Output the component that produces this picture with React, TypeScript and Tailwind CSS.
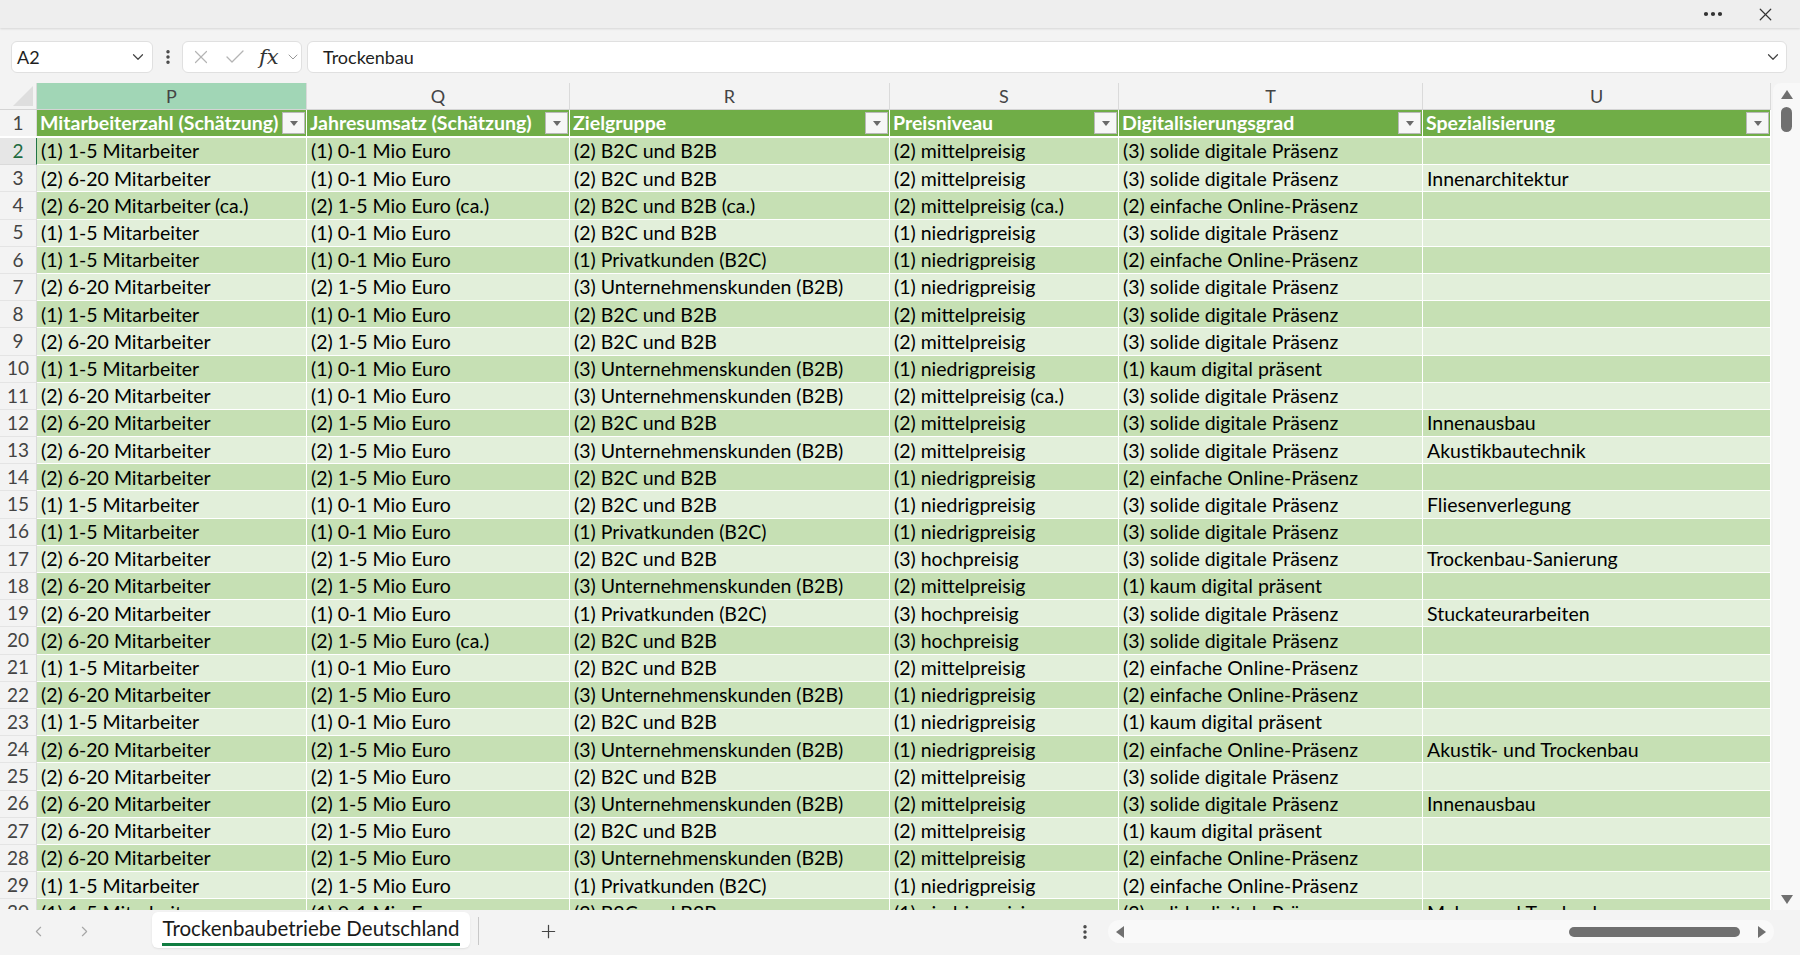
import React from 'react';
import { X, Check, ChevronDown, ChevronLeft, ChevronRight, Plus, Ellipsis, EllipsisVertical } from 'lucide-react';

const columns = [
  { letter: 'P', title: 'Mitarbeiterzahl (Schätzung)', width: 'w-[270px]' },
  { letter: 'Q', title: 'Jahresumsatz (Schätzung)', width: 'w-[263px]' },
  { letter: 'R', title: 'Zielgruppe', width: 'w-[320px]' },
  { letter: 'S', title: 'Preisniveau', width: 'w-[229px]' },
  { letter: 'T', title: 'Digitalisierungsgrad', width: 'w-[304px]' },
  { letter: 'U', title: 'Spezialisierung', width: 'w-[348px]' },
];

const M1 = '(1) 1-5 Mitarbeiter';
const M2 = '(2) 6-20 Mitarbeiter';
const U1 = '(1) 0-1 Mio Euro';
const U2 = '(2) 1-5 Mio Euro';
const ZB = '(2) B2C und B2B';
const ZP = '(1) Privatkunden (B2C)';
const ZU = '(3) Unternehmenskunden (B2B)';
const PN = '(1) niedrigpreisig';
const PM = '(2) mittelpreisig';
const PH = '(3) hochpreisig';
const DS = '(3) solide digitale Präsenz';
const DE = '(2) einfache Online-Präsenz';
const DK = '(1) kaum digital präsent';

const rows: string[][] = [
  [M1, U1, ZB, PM, DS, ''],
  [M2, U1, ZB, PM, DS, 'Innenarchitektur'],
  ['(2) 6-20 Mitarbeiter (ca.)', '(2) 1-5 Mio Euro (ca.)', '(2) B2C und B2B (ca.)', '(2) mittelpreisig (ca.)', DE, ''],
  [M1, U1, ZB, PN, DS, ''],
  [M1, U1, ZP, PN, DE, ''],
  [M2, U2, ZU, PN, DS, ''],
  [M1, U1, ZB, PM, DS, ''],
  [M2, U2, ZB, PM, DS, ''],
  [M1, U1, ZU, PN, DK, ''],
  [M2, U1, ZU, '(2) mittelpreisig (ca.)', DS, ''],
  [M2, U2, ZB, PM, DS, 'Innenausbau'],
  [M2, U2, ZU, PM, DS, 'Akustikbautechnik'],
  [M2, U2, ZB, PN, DE, ''],
  [M1, U1, ZB, PN, DS, 'Fliesenverlegung'],
  [M1, U1, ZP, PN, DS, ''],
  [M2, U2, ZB, PH, DS, 'Trockenbau-Sanierung'],
  [M2, U2, ZU, PM, DK, ''],
  [M2, U1, ZP, PH, DS, 'Stuckateurarbeiten'],
  [M2, '(2) 1-5 Mio Euro (ca.)', ZB, PH, DS, ''],
  [M1, U1, ZB, PM, DE, ''],
  [M2, U2, ZU, PN, DE, ''],
  [M1, U1, ZB, PN, DK, ''],
  [M2, U2, ZU, PN, DE, 'Akustik- und Trockenbau'],
  [M2, U2, ZB, PM, DS, ''],
  [M2, U2, ZU, PM, DS, 'Innenausbau'],
  [M2, U2, ZB, PM, DK, ''],
  [M2, U2, ZU, PM, DE, ''],
  [M1, U2, ZP, PN, DE, ''],
  [M1, U1, ZB, PN, DS, 'Maler- und Trockenbau'],
];

function FilterButton() {
  return (
    <div className="mr-px flex h-[22px] w-[23px] shrink-0 items-center justify-center border border-[#b9b9b9] bg-[#f6f6f6]">
      <div className="h-0 w-0 border-x-[4px] border-t-[5px] border-x-transparent border-t-[#6a6a6a]" />
    </div>
  );
}

export default function App() {
  return (
    <div
      className="flex h-[955px] w-[1800px] flex-col overflow-hidden bg-[#f3f3f3] text-[#1f1f1f]"
      style={{ fontFamily: "Lato, 'Liberation Sans', sans-serif" }}
    >
      {/* window strip */}
      <div className="relative z-10 flex h-[28px] shrink-0 items-center justify-end bg-[#eeeeee] pr-[24px] shadow-[0_1px_2px_rgba(0,0,0,0.12)]">
        <Ellipsis className="mr-[30px] h-[24px] w-[24px] text-[#333]" strokeWidth={2.2} />
        <X className="h-[21px] w-[21px] text-[#333]" strokeWidth={1.4} />
      </div>

      {/* formula bar */}
      <div className="flex h-[55px] shrink-0 items-start pl-[11px] pt-[13px]">
        <div className="flex h-[32px] w-[142px] items-center justify-between rounded-md border border-[#e0e0e0] bg-white pl-[5px] pr-[5px] text-[18px]">
          <span>A2</span>
          <ChevronDown className="h-[18px] w-[18px] text-[#444]" strokeWidth={1.6} />
        </div>
        <div className="flex h-[32px] w-[29px] items-center justify-center">
          <EllipsisVertical className="h-[18px] w-[18px] text-[#444]" strokeWidth={2.6} />
        </div>
        <div className="flex h-[32px] w-[120px] items-center rounded-md border border-[#e0e0e0] bg-white pl-[7px]">
          <X className="h-[22px] w-[22px] text-[#b4b4b4]" strokeWidth={1.3} />
          <Check className="ml-[11px] h-[24px] w-[24px] text-[#b4b4b4]" strokeWidth={1.3} />
          <span
            className="ml-[12px] text-[21px] italic leading-none text-[#333]"
            style={{ fontFamily: "'DejaVu Serif', 'Liberation Serif', serif" }}
          >
            fx
          </span>
          <ChevronDown className="ml-[6px] h-[16px] w-[16px] text-[#999]" strokeWidth={1.5} />
        </div>
        <div className="ml-[5px] flex h-[32px] w-[1480px] items-center justify-between rounded-md border border-[#e0e0e0] bg-white pl-[15px] pr-[4px] text-[18px]">
          <span>Trockenbau</span>
          <ChevronDown className="h-[18px] w-[18px] text-[#444]" strokeWidth={1.6} />
        </div>
      </div>

      {/* sheet + vertical scrollbar */}
      <div className="flex h-[827px] shrink-0">
        <div className="flex w-[1771px] flex-col overflow-hidden bg-white">
          {/* column letters */}
          <div className="flex h-[27px] shrink-0 border-b border-[#d4d4d4] bg-[#f3f3f3] text-[18px] text-[#444]">
            <div className="relative w-[37px] shrink-0 border-r border-[#dadada]">
              <div className="absolute bottom-[3px] right-[3px] h-0 w-0 border-b-[20px] border-l-[20px] border-l-transparent border-b-[#dedede]" />
            </div>
            {columns.map((c, i) => (
              <div
                key={c.letter}
                className={`${c.width} flex shrink-0 items-center justify-center border-r border-[#dadada] ${i === 0 ? 'bg-[#a1d6b6]' : ''}`}
              >
                {c.letter}
              </div>
            ))}
          </div>

          {/* table header row */}
          <div className="flex h-[28px] shrink-0 border-b-2 border-white">
            <div className="flex w-[37px] shrink-0 items-center justify-center border-r border-[#dadada] bg-[#f3f3f3] text-[19px] text-[#444]">
              1
            </div>
            {columns.map((c) => (
              <div
                key={c.letter}
                className={`${c.width} flex shrink-0 items-center justify-between border-r border-white bg-[#70ad47] pl-[3px] text-[19.5px] font-bold text-white`}
              >
                <span className="whitespace-nowrap">{c.title}</span>
                <FilterButton />
              </div>
            ))}
          </div>

          {/* data rows */}
          {rows.map((r, idx) => {
            const n = idx + 2;
            const dark = n % 2 === 0;
            const active = n === 2;
            return (
              <div key={n} className="flex h-[27.2px] shrink-0">
                <div
                  className={`flex w-[37px] shrink-0 items-center justify-center border-b border-r text-[19px] ${
                    active
                      ? 'border-b-[#dadada] border-r-[#217346] bg-[#e6e6e6] text-[#1e6b41]'
                      : 'border-b-[#e4e4e4] border-r-[#dadada] bg-[#f3f3f3] text-[#444]'
                  }`}
                >
                  {n}
                </div>
                {columns.map((c, ci) => (
                  <div
                    key={c.letter}
                    className={`${c.width} flex shrink-0 items-center overflow-hidden whitespace-nowrap border-b border-r border-white pl-[4px] text-[19.5px] text-black ${
                      dark ? 'bg-[#c6e0b4]' : 'bg-[#e2efda]'
                    }`}
                  >
                    {r[ci]}
                  </div>
                ))}
              </div>
            );
          })}
        </div>

        {/* vertical scrollbar */}
        <div className="flex w-[29px] shrink-0 pl-[2px]">
          <div className="flex w-full flex-col items-center rounded-tl-lg bg-[#f8f8f8] pt-[7px] pb-[6px]">
            <div className="h-0 w-0 border-x-[6px] border-b-[9px] border-x-transparent border-b-[#707070]" />
            <div className="mt-[8px] h-[25px] w-[11px] rounded-full bg-[#707070]" />
            <div className="flex-1" />
            <div className="h-0 w-0 border-x-[6px] border-t-[9px] border-x-transparent border-t-[#707070]" />
          </div>
        </div>
      </div>

      {/* sheet tabs + horizontal scrollbar */}
      <div className="flex h-[45px] shrink-0 items-start">
        <div className="flex h-[43px] items-center pl-[30px]">
          <ChevronLeft className="h-[17px] w-[17px] text-[#a6a6a6]" strokeWidth={1.6} />
          <ChevronRight className="ml-[29px] h-[17px] w-[17px] text-[#a6a6a6]" strokeWidth={1.6} />
        </div>
        <div className="ml-[59px] mt-[2px] flex h-[36px] w-[318px] flex-col items-center justify-center rounded-md bg-white shadow-[0_1px_2px_rgba(0,0,0,0.08)]">
          <span className="mt-[2px] whitespace-nowrap text-[20.5px] leading-[24px] text-[#1a1a1a]">Trockenbaubetriebe Deutschland</span>
          <div className="mt-[3px] h-[3px] w-[298px] bg-[#107c41]" />
        </div>
        <div className="ml-[8px] mt-[7px] h-[28px] w-px bg-[#c8c8c8]" />
        <div className="ml-[59px] flex h-[43px] items-center">
          <Plus className="h-[21px] w-[21px] text-[#444]" strokeWidth={1.4} />
        </div>
        <div className="ml-[517px] flex h-[43px] items-center">
          <EllipsisVertical className="h-[18px] w-[18px] text-[#444]" strokeWidth={2.6} />
        </div>
        <div className="ml-[14px] mt-[10px] flex h-[23px] w-[666px] items-center rounded-full bg-[#f9f9f9] pl-[8px] pr-[8px]">
          <div className="h-0 w-0 border-y-[6px] border-r-[8px] border-y-transparent border-r-[#707070]" />
          <div className="flex-1" />
          <div className="h-[10px] w-[171px] rounded-full bg-[#707070]" />
          <div className="ml-[18px] h-0 w-0 border-y-[6px] border-l-[8px] border-y-transparent border-l-[#707070]" />
        </div>
      </div>
    </div>
  );
}
